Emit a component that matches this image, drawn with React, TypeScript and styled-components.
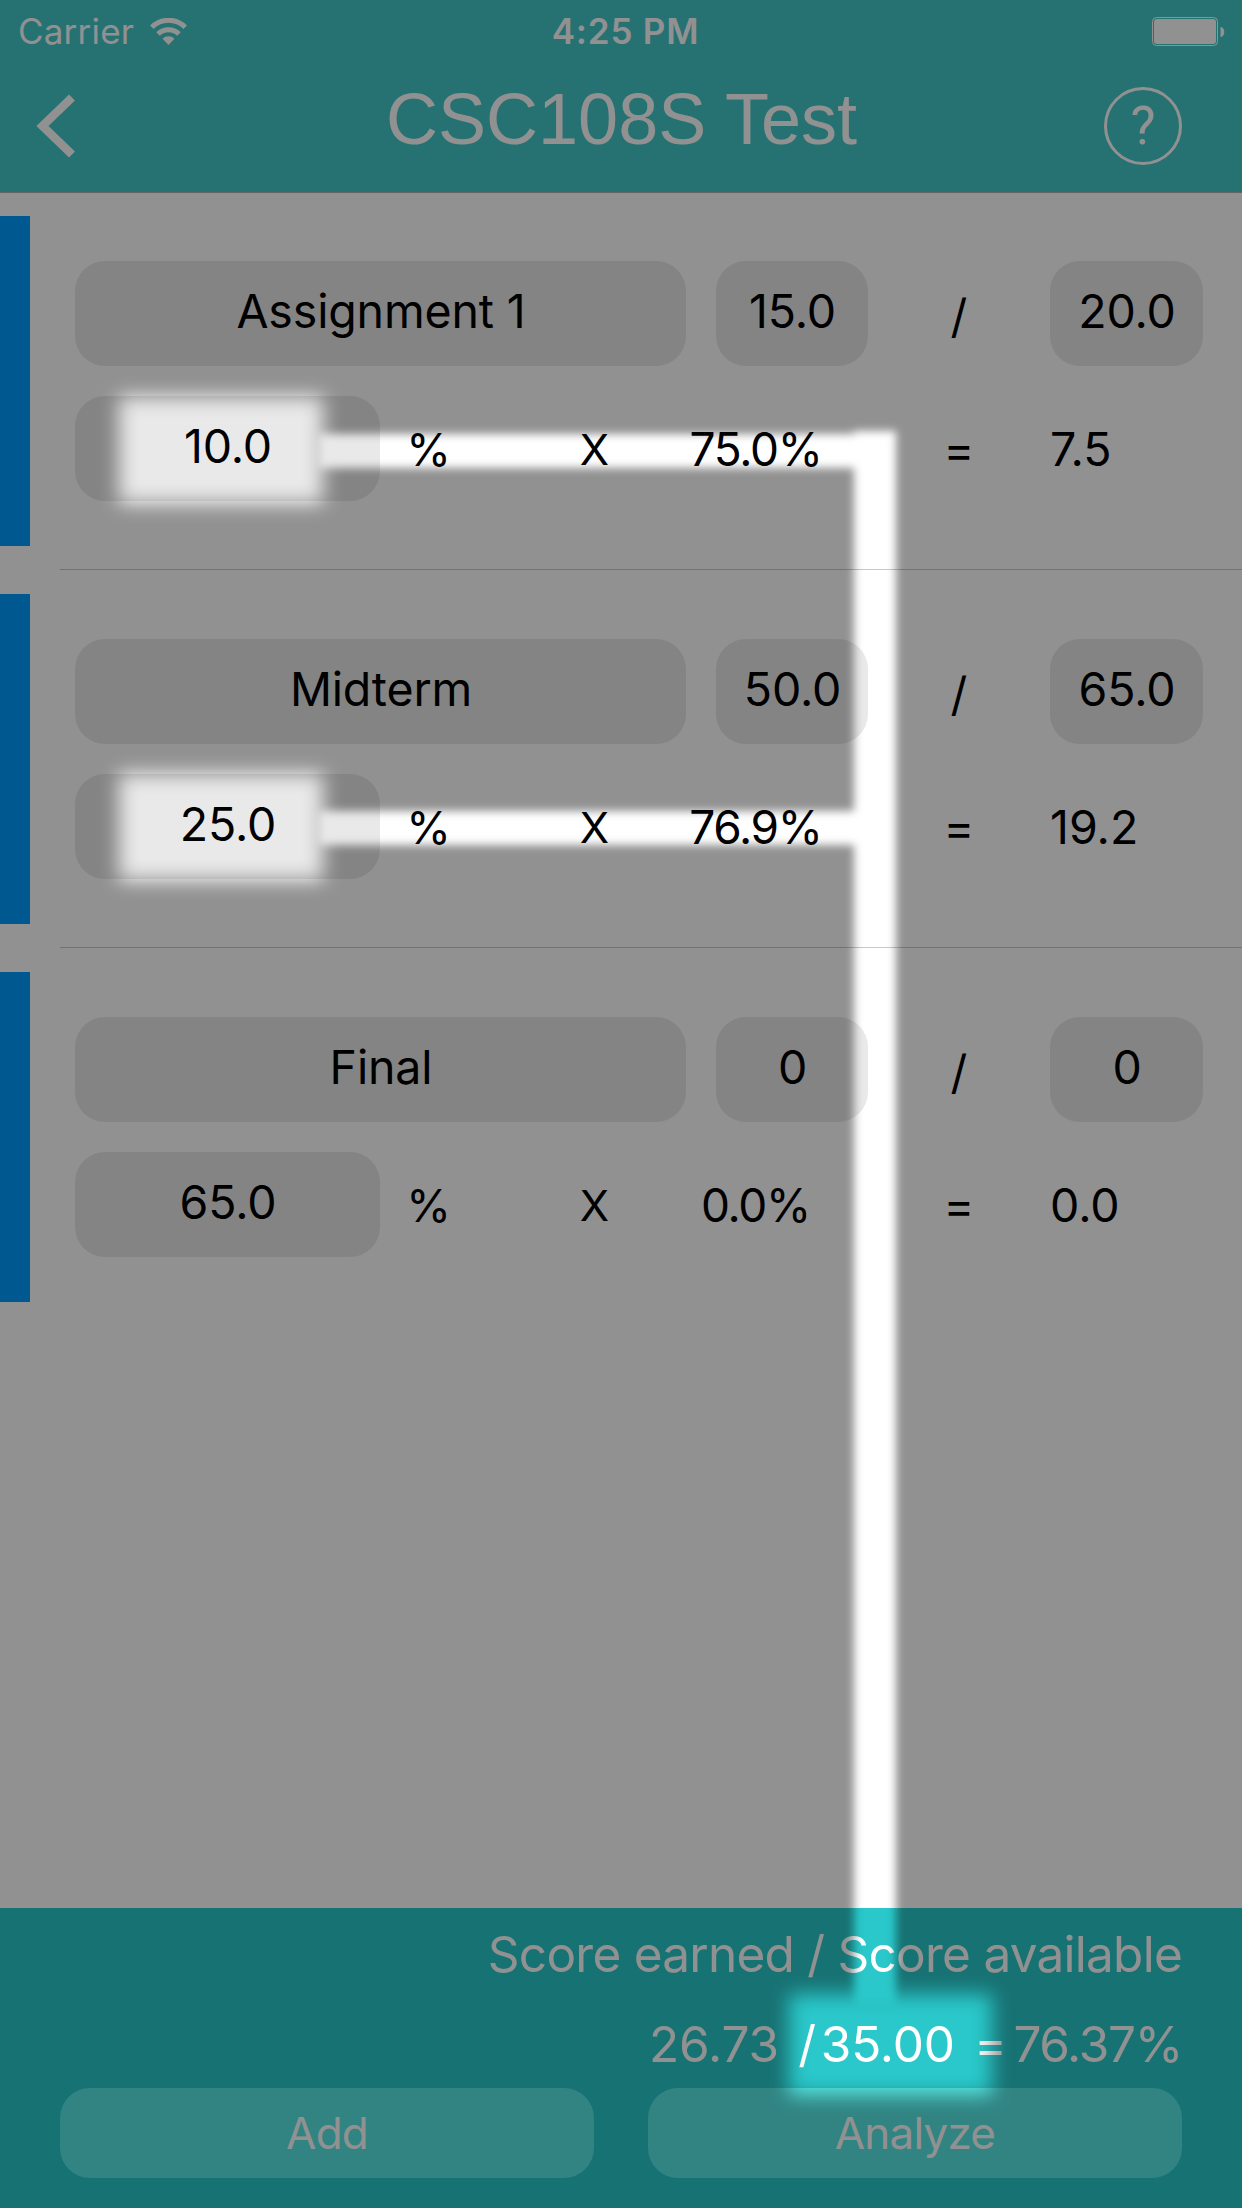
import React from "react";
import styled, { createGlobalStyle } from "styled-components";

const Global = createGlobalStyle`
  *, *::before, *::after { box-sizing: border-box; }
  body { margin: 0; background: #fff; }
`;

const Screen = styled.div`
  position: relative;
  display: flex;
  flex-direction: column;
  width: 1242px;
  height: 2208px;
  overflow: hidden;
  background: #fff;
  color: #000;
  font-family: Inter, "Liberation Sans", sans-serif;
`;

const Header = styled.header`
  height: 192px;
  flex: none;
  display: flex;
  flex-direction: column;
  background: #43c8c8;
  color: #fff;
  box-shadow: 0 1px 0 #b2b2b2;
  z-index: 1;
`;

const StatusBar = styled.div`
  height: 60px;
  display: grid;
  grid-template-columns: 1fr auto 1fr;
  align-items: center;
  padding: 2px 17px 0 18px;
  font-size: 35px;
  line-height: 58px;
`;

const Carrier = styled.div`
  display: flex;
  align-items: center;
  gap: 16px;
  letter-spacing: 0.2px;
`;

const Clock = styled.div`
  font-weight: 600;
  letter-spacing: 0.8px;
  padding-left: 8px;
`;

const Battery = styled.svg`
  justify-self: end;
  display: block;
`;

const NavBar = styled.div`
  flex: 1;
  display: grid;
  grid-template-columns: 120px 1fr 120px;
  align-items: center;
`;

const BackButton = styled.button`
  border: 0;
  background: none;
  padding: 0 0 0 36px;
  display: flex;
  color: inherit;
`;

const Title = styled.h1`
  margin: 0 0 15px;
  padding-left: 1px;
  text-align: center;
  font: 400 72px/84px "Liberation Sans", Arial, sans-serif;
`;

const HelpButton = styled.button`
  width: 78px;
  height: 78px;
  margin-left: -18px;
  border: 3px solid #fff;
  border-radius: 50%;
  background: none;
  color: #fff;
  padding: 0;
  font: 400 53px/72px Roboto, sans-serif;
`;

const List = styled.main`
  flex: 1;
`;

const Row = styled.section`
  display: flex;
  height: 378px;
  padding: 24px 0;
  position: relative;
  &:not(:last-child)::after {
    content: "";
    position: absolute;
    left: 60px;
    right: 0;
    bottom: 0;
    height: 1px;
    background: #c8c7cc;
  }
`;

const Accent = styled.div`
  width: 30px;
  background: #009bff;
`;

const Lines = styled.div`
  flex: 1;
  display: flex;
  flex-direction: column;
  gap: 30px;
  padding: 45px 39px 0 45px;
  font-size: 46.5px;
`;

const Line = styled.div<{ $columns: string }>`
  display: grid;
  grid-template-columns: ${(p) => p.$columns};
  grid-template-rows: 105px;
  height: 105px;
`;

const Field = styled.div`
  display: flex;
  align-items: center;
  justify-content: center;
  padding: 0 0 5px 1px;
  letter-spacing: -0.15px;
  border-radius: 30px;
  background: #e9e9e9;
`;

const Label = styled.span<{ $align?: string; $size?: number; $drop?: number; $track?: number }>`
  text-align: ${(p) => p.$align ?? "center"};
  font-size: ${(p) => p.$size ?? 46.5}px;
  letter-spacing: ${(p) => p.$track ?? 0}px;
  line-height: 105px;
  padding-top: ${(p) => p.$drop ?? 1}px;
`;

const Footer = styled.footer`
  height: 300px;
  flex: none;
  display: flex;
  flex-direction: column;
  padding: 0 60px 30px;
  background: #2ac8ca;
  color: #fff;
  font-size: 49.5px;
  line-height: 90px;
`;

const Caption = styled.div`
  height: 90px;
  text-align: right;
  letter-spacing: -0.75px;
  padding-top: 1px;
`;

const Totals = styled.div`
  height: 90px;
  padding-top: 1px;
  display: grid;
  grid-template-columns: 140px 37px 139px 52px 175px;
  justify-content: end;
  text-align: right;
  letter-spacing: -0.1px;
  span:last-child {
    letter-spacing: -1.3px;
    padding-right: 0;
  }
`;

const Buttons = styled.div`
  display: grid;
  grid-template-columns: 1fr 1fr;
  gap: 54px;
`;

const Action = styled.button`
  height: 90px;
  border: 0;
  border-radius: 30px;
  background: #56e8e4;
  color: #fff;
  padding: 0;
  font: 400 44px/90px Inter, sans-serif;
  letter-spacing: -0.8px;
`;

const Spotlight = styled.svg`
  position: absolute;
  inset: 0;
  z-index: 2;
  pointer-events: none;
`;

type Entry = { name: string; score: string; total: string; weight: string; percent: string; result: string };

const entries: Entry[] = [
  { name: "Assignment 1", score: "15.0", total: "20.0", weight: "10.0", percent: "75.0%", result: "7.5" },
  { name: "Midterm", score: "50.0", total: "65.0", weight: "25.0", percent: "76.9%", result: "19.2" },
  { name: "Final", score: "0", total: "0", weight: "65.0", percent: "0.0%", result: "0.0" },
];

const EntryRow = ({ entry }: { entry: Entry }) => (
  <Row>
    <Accent />
    <Lines>
      <Line $columns="611px 30px 152px 182px 153px">
        <Field>{entry.name}</Field>
        <span />
        <Field>{entry.score}</Field>
        <Label $drop={3}>/</Label>
        <Field>{entry.total}</Field>
      </Line>
      <Line $columns="305px 97px 69px 97px 225px 182px 153px">
        <Field>{entry.weight}</Field>
        <Label $size={45.5}>%</Label>
        <span />
        <Label $size={43}>X</Label>
        <Label $size={46} $track={-1.3}>{entry.percent}</Label>
        <Label>=</Label>
        <Label $align="left">{entry.result}</Label>
      </Line>
    </Lines>
  </Row>
);

export default function App() {
  return (
    <>
      <Global />
      <Screen>
        <Header>
          <StatusBar>
            <Carrier>
              Carrier
              <svg width="37" height="27" viewBox="0 0 37 27" fill="none" stroke="#fff" strokeWidth="5">
                <path d="M1.8 9.2a23.6 23.6 0 0 1 33.4 0" />
                <path d="M8 16a14.8 14.8 0 0 1 21 0" />
                <path d="M12.5 20.8a8.5 8.5 0 0 1 12 0L18.500 27z" fill="#fff" stroke="none" />
              </svg>
            </Carrier>
            <Clock>4:25 PM</Clock>
            <Battery width="73" height="29" viewBox="0 0 73 29">
              <rect x="0.5" y="0.5" width="65" height="28" rx="4" fill="none" stroke="#fff" />
              <rect x="2" y="2" width="62" height="25" rx="3" fill="#fff" />
              <path d="M68.500 10c5 0 5 10 0 10z" fill="#fff" />
            </Battery>
          </StatusBar>
          <NavBar>
            <BackButton aria-label="Back">
              <svg width="40" height="64" viewBox="0 0 40 64" fill="none" stroke="currentColor" strokeWidth="8.500">
                <path d="M36 3.500L6.500 32L36 60.500" />
              </svg>
            </BackButton>
            <Title>CSC108S Test</Title>
            <HelpButton>?</HelpButton>
          </NavBar>
        </Header>
        <List>
          {entries.map((entry) => (
            <EntryRow key={entry.name} entry={entry} />
          ))}
        </List>
        <Footer>
          <Caption>Score earned / Score available</Caption>
          <Totals>
            <span>26.73</span>
            <span>/</span>
            <span>35.00</span>
            <span>=</span>
            <span>76.37%</span>
          </Totals>
          <Buttons>
            <Action>Add</Action>
            <Action>Analyze</Action>
          </Buttons>
        </Footer>
        <Spotlight width="1242" height="2208" viewBox="0 0 1242 2208">
          <defs>
            <filter id="boxBlur" filterUnits="userSpaceOnUse" x="0" y="0" width="1242" height="2208" colorInterpolationFilters="sRGB">
              <feGaussianBlur stdDeviation="9.500" />
            </filter>
            <filter id="beamBlur" filterUnits="userSpaceOnUse" x="0" y="0" width="1242" height="2208" colorInterpolationFilters="sRGB">
              <feGaussianBlur stdDeviation="4" />
            </filter>
            <mask id="cutout" maskUnits="userSpaceOnUse" x="0" y="0" width="1242" height="2208" style={{ maskType: "luminance" }}>
              <rect width="1242" height="2208" fill="#fff" />
              <g filter="url(#boxBlur)">
                <rect x="119" y="397" width="204" height="106" />
                <rect x="119" y="774" width="204" height="106" />
                <rect x="789" y="1994" width="203" height="101" />
              </g>
              <g filter="url(#beamBlur)">
                <rect x="318" y="434" width="542" height="34" />
                <rect x="318" y="811" width="542" height="34" />
                <rect x="854" y="431" width="42" height="1575" />
              </g>
            </mask>
          </defs>
          <rect width="1242" height="2208" fill="#000" fillOpacity="0.431" mask="url(#cutout)" />
        </Spotlight>
      </Screen>
    </>
  );
}
